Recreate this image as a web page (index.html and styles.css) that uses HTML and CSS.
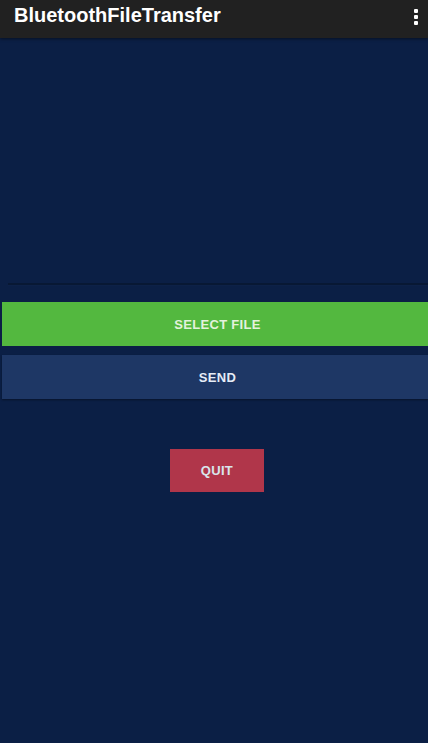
FILE: index.html
```html
<!DOCTYPE html>
<html>
<head>
<meta charset="utf-8">
<link rel="stylesheet" href="styles.css">
</head>
<body>
<div class="app">
  <header class="toolbar">
    <span class="title">BluetoothFileTransfer</span>
    <span class="menu"><i></i><i></i><i></i></span>
  </header>
  <main class="content">
    <div class="spinner"></div>
    <button class="btn select">SELECT FILE</button>
    <button class="btn send">SEND</button>
    <div class="quit-row"><button class="btn quit">QUIT</button></div>
  </main>
</div>
</body>
</html>
```
FILE: styles.css
```css
* { box-sizing: border-box; }
html, body { margin: 0; padding: 0; }
body {
  width: 428px;
  height: 743px;
  background: #0b1f45;
  font-family: "Liberation Sans", Arial, sans-serif;
  overflow: hidden;
}
.app { display: flex; flex-direction: column; height: 743px; }
.toolbar {
  height: 38px;
  background: #212121;
  display: flex;
  align-items: center;
  justify-content: space-between;
  padding: 0 10px 7px 14px;
  box-shadow: 0 1px 3px rgba(0,0,0,0.5);
}
.title {
  color: #fff;
  font-family: "Liberation Sans", Arial, sans-serif;
  font-size: 20px;
  font-weight: 700;
}
.menu { display: flex; flex-direction: column; gap: 2px; padding-top: 2px; }
.menu i { display: block; width: 4px; height: 4px; background: #fff; border-radius: 1px; }
.content { flex: 1; display: flex; flex-direction: column; padding-top: 245px; }
.spinner {
  margin-left: 8px;
  height: 3px;
  background: #081834;
  border-bottom: 1px solid #0d2147;
}
.btn {
  border: none;
  font-family: "Liberation Sans", Arial, sans-serif;
  font-size: 13px;
  font-weight: 700;
  letter-spacing: 0.3px;
  padding: 0;
}
.select {
  margin: 16px 0 0 2px;
  padding-left: 5px;
  height: 44px;
  background: #53b83f;
  color: #e4f2dc;
}
.send {
  margin: 9px 0 0 2px;
  padding-left: 5px;
  height: 44px;
  background: #1e3765;
  color: #e6ecf6;
  box-shadow: 0 1px 2px rgba(0,0,0,0.4);
}
.quit-row { display: flex; justify-content: center; padding: 50px 0 0 6px; }
.quit {
  width: 94px;
  height: 43px;
  background: #b0364a;
  color: #d9e6ec;
}
```
